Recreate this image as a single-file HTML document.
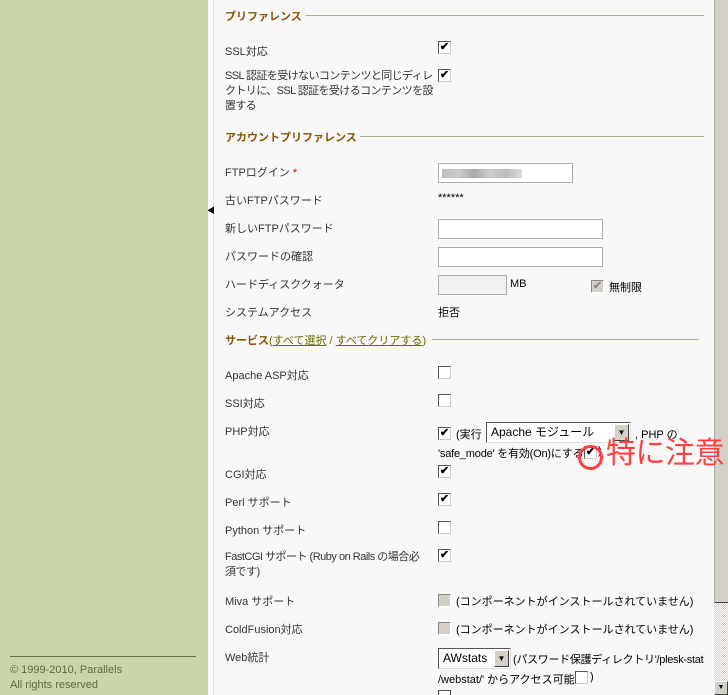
<!DOCTYPE html>
<html style="overflow:hidden;height:695px"><head><meta charset="utf-8"><style>
*{margin:0;padding:0;box-sizing:border-box}
html,body{overflow:hidden}
body{width:728px;height:695px;background:#f8f8f8;font-family:"Liberation Sans","Noto Sans CJK JP",sans-serif;font-size:11px;color:#333;position:relative}
.a{position:absolute;white-space:nowrap}
.side{left:0;top:0;width:208px;height:695px;background:#c9d7a7}
.strip{left:208px;top:0;width:6px;height:695px;background:#fff;border-right:1px solid #dde3ec}
.h{color:#8b5200;font-weight:bold;font-size:11px}
.ln{height:1px;background:#a4b88a}
.cb{width:13px;height:13px;border:1px solid #555;border-right-color:#ccc;border-bottom-color:#ccc;background:#fff;font-size:11px;line-height:10px;text-align:center;font-weight:bold;color:#000}
.dis{background:#d4d0c8;border-color:#888 #fff #fff #888;color:#888}
.in{height:20px;border:1px solid #a8aeb4;background:#fff}
.v{color:#000}
.sel{height:21px;border:1px solid #555;border-right-color:#ddd;border-bottom-color:#ddd;background:#fff;color:#000;font-size:12px;line-height:18px;padding-left:4px}
.arr{position:absolute;right:1px;top:1px;width:15px;height:17px;background:#d4d0c8;border:1px solid;border-color:#fff #404040 #404040 #fff;font-size:8px;line-height:15px;text-align:center}
</style></head><body>
<div class="a side"></div>
<div class="a" style="left:10px;top:656px;width:186px;height:1px;background:#66753f"></div>
<div class="a" style="left:10px;top:663px;color:#5e6b3a;font-size:11px;line-height:15px">© 1999-2010, Parallels<br>All rights reserved</div>
<div class="a strip"></div>
<div class="a" style="left:207px;top:205px;font-size:8px;color:#000">◀</div>

<div class="a h" style="left:225px;top:8px">プリファレンス</div><div class="a ln" style="left:306px;top:15px;width:398px"></div>
<div class="a" style="left:225px;top:43px">SSL対応</div><div class="a cb" style="left:438px;top:41px">✔</div>
<div class="a" style="left:225px;top:69px;line-height:15px;letter-spacing:-0.6px">SSL 認証を受けないコンテンツと同じディレ<br>クトリに、SSL 認証を受けるコンテンツを設<br>置する</div><div class="a cb" style="left:438px;top:69px">✔</div>

<div class="a h" style="left:225px;top:129px">アカウントプリファレンス</div><div class="a ln" style="left:360px;top:136px;width:344px"></div>
<div class="a" style="left:225px;top:164px">FTPログイン <span style="color:#c00">*</span></div>
<div class="a in" style="left:438px;top:163px;width:135px"><div style="margin:5px 0 0 3px;width:80px;height:9px;background:linear-gradient(90deg,#bbb,#ccc,#aaa,#ccc,#bbb,#ddd)"></div></div>
<div class="a" style="left:225px;top:192px">古いFTPパスワード</div><div class="a v" style="left:438px;top:192px">******</div>
<div class="a" style="left:225px;top:220px">新しいFTPパスワード</div><div class="a in" style="left:438px;top:219px;width:165px"></div>
<div class="a" style="left:225px;top:248px">パスワードの確認</div><div class="a in" style="left:438px;top:247px;width:165px"></div>
<div class="a" style="left:225px;top:276px">ハードディスククォータ</div><div class="a in" style="left:438px;top:275px;width:69px;background:#f0f0f0"></div><div class="a v" style="left:510px;top:278px">MB</div>
<div class="a cb dis" style="left:591px;top:280px">✔</div><div class="a v" style="left:609px;top:279px">無制限</div>
<div class="a" style="left:225px;top:304px">システムアクセス</div><div class="a v" style="left:438px;top:304px">拒否</div>

<div class="a h" style="left:225px;top:332px">サービス<span style="font-weight:normal;color:#6b6b00">(<u>すべて選択</u> / <u>すべてクリアする</u>)</span></div><div class="a ln" style="left:432px;top:339px;width:267px"></div>
<div class="a" style="left:225px;top:367px">Apache ASP対応</div><div class="a cb" style="left:438px;top:366px"></div>
<div class="a" style="left:225px;top:395px">SSI対応</div><div class="a cb" style="left:438px;top:394px"></div>
<div class="a" style="left:225px;top:423px">PHP対応</div><div class="a cb" style="left:438px;top:427px">✔</div>
<div class="a v" style="left:456px;top:426px">(実行</div>
<div class="a sel" style="left:486px;top:422px;width:145px">Apache モジュール<div class="arr">▼</div></div>
<div class="a v" style="left:635px;top:426px">, PHP の</div>
<div class="a v" style="left:438px;top:445px;letter-spacing:-0.2px">'safe_mode' を有効(On)にする</div><div class="a cb" style="left:584px;top:446px">✔</div><div class="a v" style="left:598px;top:445px">)</div>

<div class="a" style="left:714px;top:0;width:14px;height:695px;background:repeating-conic-gradient(#d4d0c8 0 25%,#fff 0 50%) 0 0/2px 2px"></div>
<div class="a" style="left:714px;top:0;width:14px;height:603px;background:#d4d0c8;border-left:1px solid #fff;border-bottom:1px solid #404040"></div>
<div class="a" style="left:714px;top:0;width:1px;height:603px;background:#aaa"></div>
<div class="a" style="left:714px;top:681px;width:14px;height:14px;background:#d4d0c8;border:1px solid;border-color:#fff #404040 #404040 #fff;font-size:7px;line-height:12px;text-align:center;color:#000">▼</div>

<div class="a" style="left:578px;top:445px;width:25px;height:25px;border:3px solid #ff4040;border-radius:50%;z-index:5"></div>
<div class="a" style="left:606px;top:436px;color:#ff4040;font-size:30px;line-height:36px;letter-spacing:-0.5px;z-index:5">特に注意</div>
<div class="a" style="left:225px;top:466px">CGI対応</div><div class="a cb" style="left:438px;top:465px">✔</div>
<div class="a" style="left:225px;top:494px">Perl サポート</div><div class="a cb" style="left:438px;top:493px">✔</div>
<div class="a" style="left:225px;top:522px">Python サポート</div><div class="a cb" style="left:438px;top:521px"></div>
<div class="a" style="left:225px;top:550px;line-height:15px;letter-spacing:-0.5px">FastCGI サポート (Ruby on Rails の場合必<br>須です)</div><div class="a cb" style="left:438px;top:549px">✔</div>
<div class="a" style="left:225px;top:593px">Miva サポート</div><div class="a cb dis" style="left:438px;top:594px"></div><div class="a v" style="left:456px;top:593px">(コンポーネントがインストールされていません)</div>
<div class="a" style="left:225px;top:621px">ColdFusion対応</div><div class="a cb dis" style="left:438px;top:622px"></div><div class="a v" style="left:456px;top:621px">(コンポーネントがインストールされていません)</div>
<div class="a" style="left:225px;top:649px">Web統計</div>
<div class="a sel" style="left:438px;top:648px;width:73px">AWstats<div class="arr">▼</div></div>
<div class="a v" style="left:513px;top:651px;letter-spacing:-0.3px">(パスワード保護ディレクトリ'/plesk-stat</div>
<div class="a v" style="left:438px;top:671px">/webstat/' からアクセス可能</div><div class="a cb" style="left:575px;top:671px"></div><div class="a v" style="left:590px;top:671px">)</div>
<div class="a" style="left:438px;top:690px;width:13px;height:5px;border:1px solid #555;border-bottom:none;background:#fff"></div>
</body></html>
